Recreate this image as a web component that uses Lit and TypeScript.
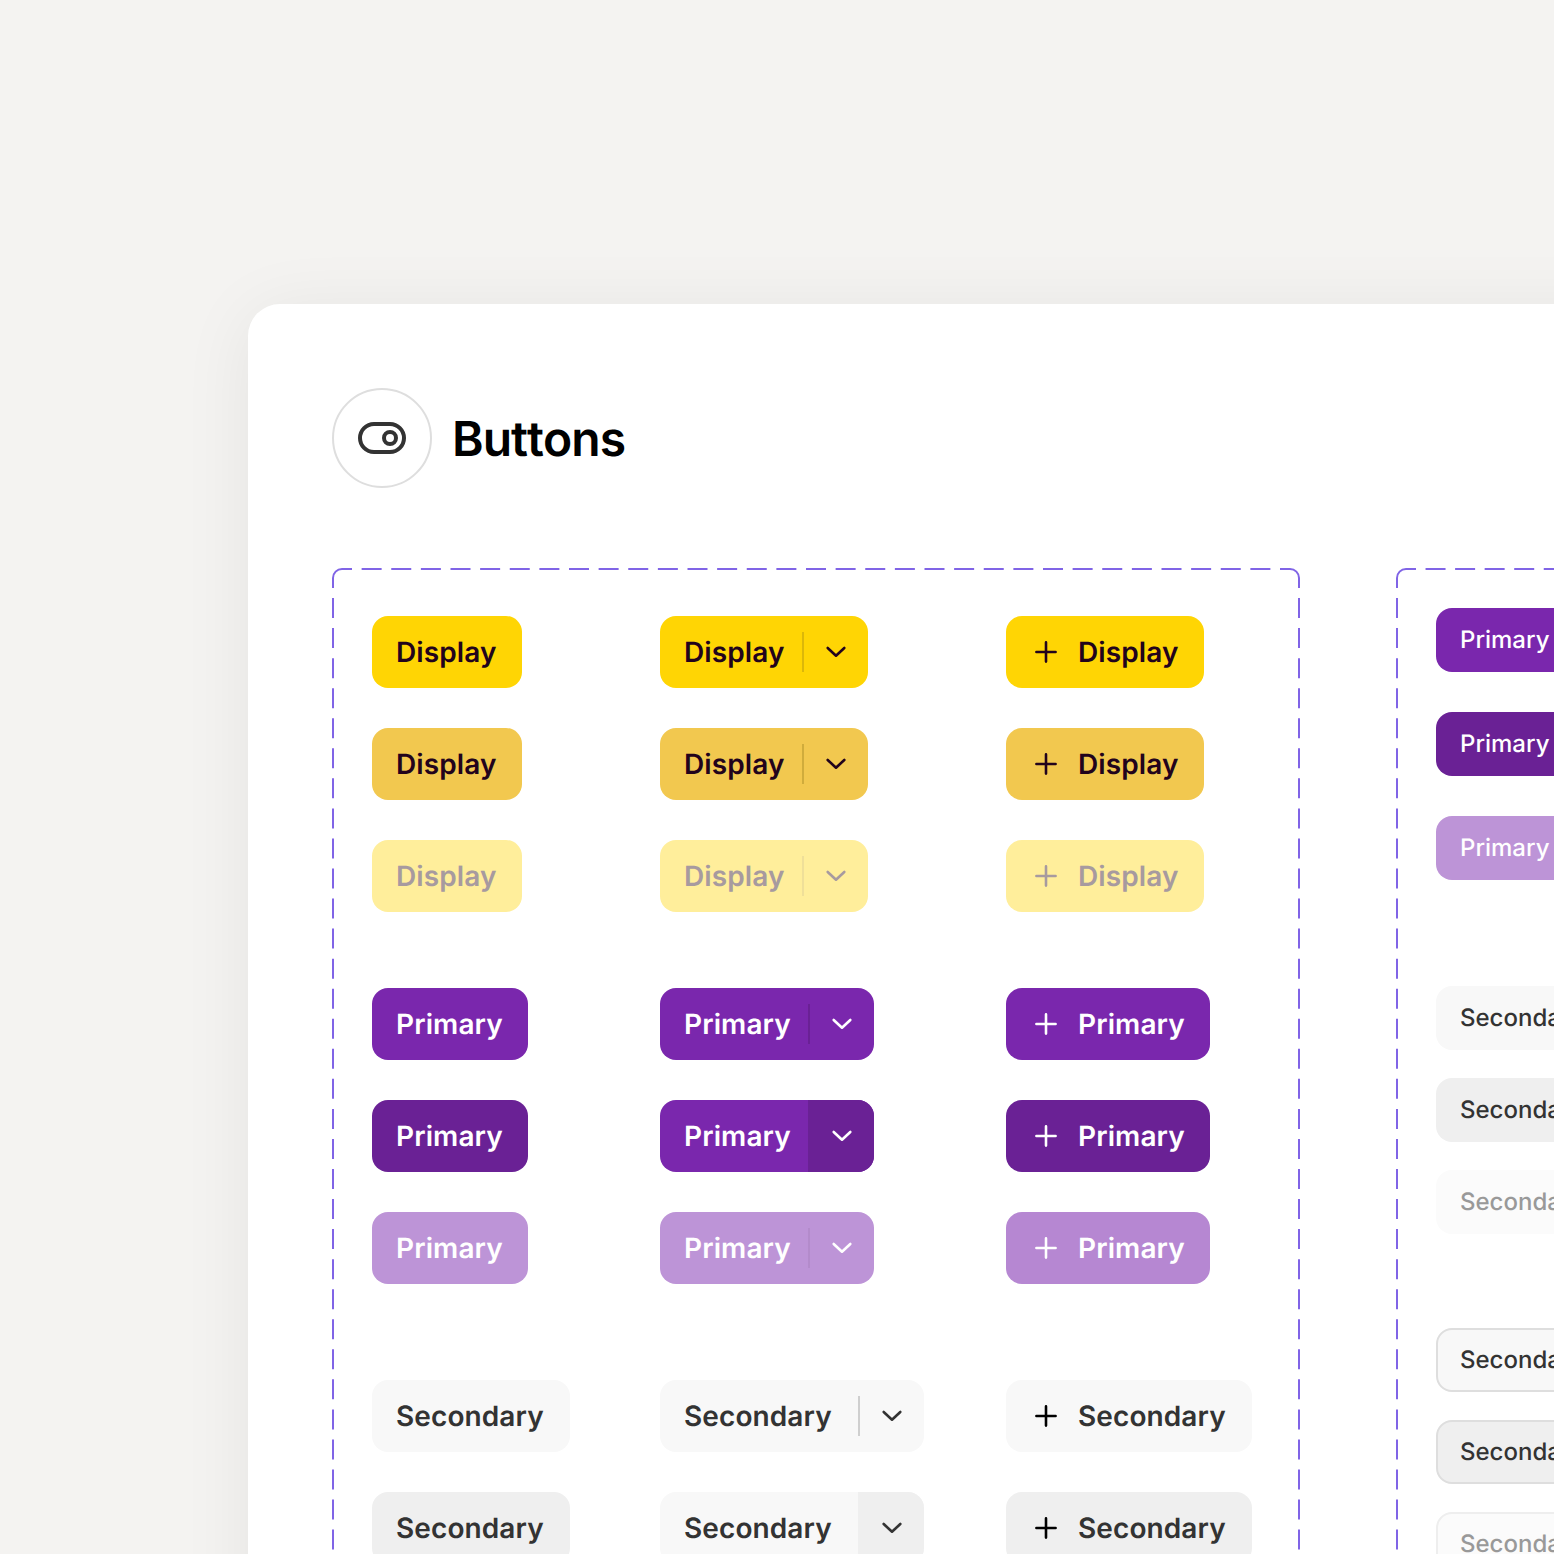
import { LitElement, html, css, svg, nothing } from "lit";
import { customElement, property } from "lit/decorators.js";

type Kind = "plain" | "split" | "plus";

@customElement("ui-button")
class UiButton extends LitElement {
  @property() label = "";
  @property() kind: Kind = "plain";
  @property() tone = "display";

  static styles = css`
    :host { display: inline-flex; vertical-align: top; }
    .btn {
      display: inline-flex; align-items: stretch; box-sizing: border-box;
      height: 72px; margin: 0; padding: 0; border: 0; border-radius: 16px; overflow: hidden;
      font: 600 28px/40px Inter, "Liberation Sans", sans-serif;
      letter-spacing: 0.1px; text-rendering: geometricPrecision; white-space: nowrap;
      background: var(--bg); color: var(--fg);
    }
    .text {
      display: flex; align-items: center; box-sizing: border-box;
      width: calc(var(--label) + 48px); padding: 0 0 0 24px;
    }
    .plus { padding-left: 24px; gap: 16px; align-items: center; }
    .plus .text { width: calc(var(--label) + 24px); padding-left: 0; }
    .split .text { width: calc(var(--label) + 24px + var(--space, 16px)); }
    .glyph { display: block; width: 32px; height: 32px; color: var(--icon, var(--fg)); }
    .toggle {
      display: flex; align-items: center; justify-content: center;
      box-sizing: border-box; width: 66px; background: var(--toggle, transparent);
    }
    .rule { width: 2px; height: 40px; margin-right: 16px; background: var(--rule); }
    .toggle .glyph { margin-right: 16px; }
    .label-display { --label: 102px; }
    .label-primary { --label: 108px; }
    .label-secondary { --label: 150px; --space: 24px; }
    .display { --bg: #ffd504; --fg: #22031c; --rule: #dbb70a; }
    .display-hover { --bg: #f2c84f; --fg: #22031c; --rule: #d0ac3c; }
    .display-off { --bg: #ffee9b; --fg: #a79a9f; --rule: #efdf99; }
    .primary { --bg: #7a27ad; --fg: #fff; --rule: #6a2195; }
    .primary-hover { --bg: #6a2195; --fg: #fff; --rule: transparent; }
    .primary-open { --bg: #7a27ad; --fg: #fff; --toggle: #6a2195; --rule: transparent; }
    .primary-off { --bg: #bd94d7; --fg: #fff; --rule: #b38bcb; }
    .primary-off-deep { --bg: #b687d2; --fg: #fff; }
    .secondary { --bg: #f8f8f8; --fg: #333; --rule: #cfcfcf; }
    .secondary-hover { --bg: #efefef; --fg: #333; }
    .secondary-open { --bg: #f8f8f8; --fg: #333; --toggle: #efefef; --rule: transparent; }
    .secondary-off { --bg: #fbfbfb; --fg: #999; }
    .secondary.plus, .secondary-hover.plus { --icon: #000; }
    .small { height: 64px; font-weight: 500; font-size: 24px; line-height: 32px; letter-spacing: 0; }
    .outlined { border: 2px solid #dedede; }
    .outlined .text { padding-left: 22px; }
    .outlined.secondary-off { border-color: #eee; }
  `;

  render() {
    const plus = svg`<path d="M16 6.4V25.6M6.4 16H25.6" />`;
    const chevron = svg`<path d="M7.7 12L16 19.7L24.3 12" />`;
    const icon = (shape: unknown) => html`<svg class="glyph" viewBox="0 0 32 32" fill="none"
      stroke="currentColor" stroke-width="2.6" stroke-linecap="round" stroke-linejoin="round">${shape}</svg>`;
    return html`<button class="btn ${this.kind} ${this.tone} label-${this.label.toLowerCase()}">
      ${this.kind === "plus" ? icon(plus) : nothing}
      <span class="text">${this.label}</span>
      ${this.kind === "split"
        ? html`<span class="toggle"><span class="rule"></span>${icon(chevron)}</span>`
        : nothing}
    </button>`;
  }
}

@customElement("dashed-frame")
class DashedFrame extends LitElement {
  @property({ type: Number }) period = 29.625;

  static styles = css`
    :host { display: block; position: relative; box-sizing: border-box; }
    .outline { position: absolute; inset: 0; width: 100%; height: 100%; overflow: hidden; }
  `;

  render() {
    const across = `20 ${this.period - 20}`;
    return html`<svg class="outline" fill="none" stroke="#8064e6" stroke-width="2">
        <path d="M1 20V10A9 9 0 0 1 10 1H20" />
        <line x1=${this.period} y1="1" x2="947" y2="1" stroke-dasharray=${across} />
        <line x1="1" y1="30.05" x2="1" y2="1100" stroke-dasharray="20 10.05" />
        <path d="M948 1H958A9 9 0 0 1 967 10V20" />
        <line x1="967" y1="30.05" x2="967" y2="1100" stroke-dasharray="20 10.05" />
      </svg><slot></slot>`;
  }
}

const groups: { label: string; rows: [string, string, string][] }[] = [
  { label: "Display", rows: [
    ["display", "display", "display"],
    ["display-hover", "display-hover", "display-hover"],
    ["display-off", "display-off", "display-off"],
  ] },
  { label: "Primary", rows: [
    ["primary", "primary", "primary"],
    ["primary-hover", "primary-open", "primary-hover"],
    ["primary-off", "primary-off", "primary-off-deep"],
  ] },
  { label: "Secondary", rows: [
    ["secondary", "secondary", "secondary"],
    ["secondary-hover", "secondary-open", "secondary-hover"],
  ] },
];

const compact = [
  { label: "Primary", cls: "stack roomy", tones: ["primary", "primary-hover", "primary-off"] },
  { label: "Secondary", cls: "stack", tones: ["secondary", "secondary-hover", "secondary-off"] },
  { label: "Secondary", cls: "stack last", tones: ["secondary outlined", "secondary-hover outlined", "secondary-off outlined"] },
];

const kinds: Kind[] = ["plain", "split", "plus"];

@customElement("app-root")
class AppRoot extends LitElement {
  static styles = css`
    :host {
      display: block; box-sizing: border-box; width: 1554px; height: 1554px; overflow: hidden;
      padding: 304px 0 0 248px; background: #f4f3f1;
      font-family: Inter, "Liberation Sans", sans-serif;
    }
    .card {
      box-sizing: border-box; width: 2300px; height: 1600px; padding: 84px; background: #fff;
      border-radius: 32px; box-shadow: 0 8px 72px rgba(0, 0, 0, 0.065);
    }
    .head { display: flex; align-items: center; gap: 20px; height: 100px; }
    .badge {
      display: flex; align-items: center; justify-content: center; box-sizing: border-box;
      width: 100px; height: 100px; border: 2px solid #dedede; border-radius: 50%;
    }
    .badge svg { display: block; width: 48px; height: 48px; }
    .title {
      margin: 0; padding-top: 2px; font-size: 48px; line-height: 56px; font-weight: 600;
      text-rendering: geometricPrecision; font-kerning: none; letter-spacing: -0.96px; color: #000;
    }
    .panels { display: flex; gap: 96px; margin-top: 80px; }
    .panel { flex: none; width: 968px; height: 1200px; }
    .wide { padding: 48px 40px; }
    .slim { padding: 40px; }
    .group { display: grid; grid-template-columns: 288px 346px auto; row-gap: 40px; margin-bottom: 76px; }
    .group + .group { margin-bottom: 96px; }
    .stack { display: flex; flex-direction: column; align-items: flex-start; gap: 28px; margin-bottom: 94px; }
    .roomy { gap: 40px; margin-bottom: 106px; }
  `;

  render() {
    return html`<main class="card">
      <header class="head">
        <span class="badge">
          <svg viewBox="0 0 48 48" fill="none" stroke="#333" stroke-width="4">
            <rect x="2" y="10" width="44" height="28" rx="14" />
            <circle cx="32" cy="24" r="6" />
          </svg>
        </span>
        <h1 class="title">Buttons</h1>
      </header>
      <div class="panels">
        <dashed-frame class="panel wide">
          ${groups.map((g) => html`<section class="group">
            ${g.rows.map((row) => row.map((tone, i) =>
              html`<ui-button .label=${g.label} .kind=${kinds[i]} .tone=${tone}></ui-button>`))}
          </section>`)}
        </dashed-frame>
        <dashed-frame class="panel slim" .period=${29.55}>
          ${compact.map((c) => html`<section class=${c.cls}>
            ${c.tones.map((t) => html`<ui-button .label=${c.label} .tone=${"small " + t}></ui-button>`)}
          </section>`)}
        </dashed-frame>
      </div>
    </main>`;
  }
}
